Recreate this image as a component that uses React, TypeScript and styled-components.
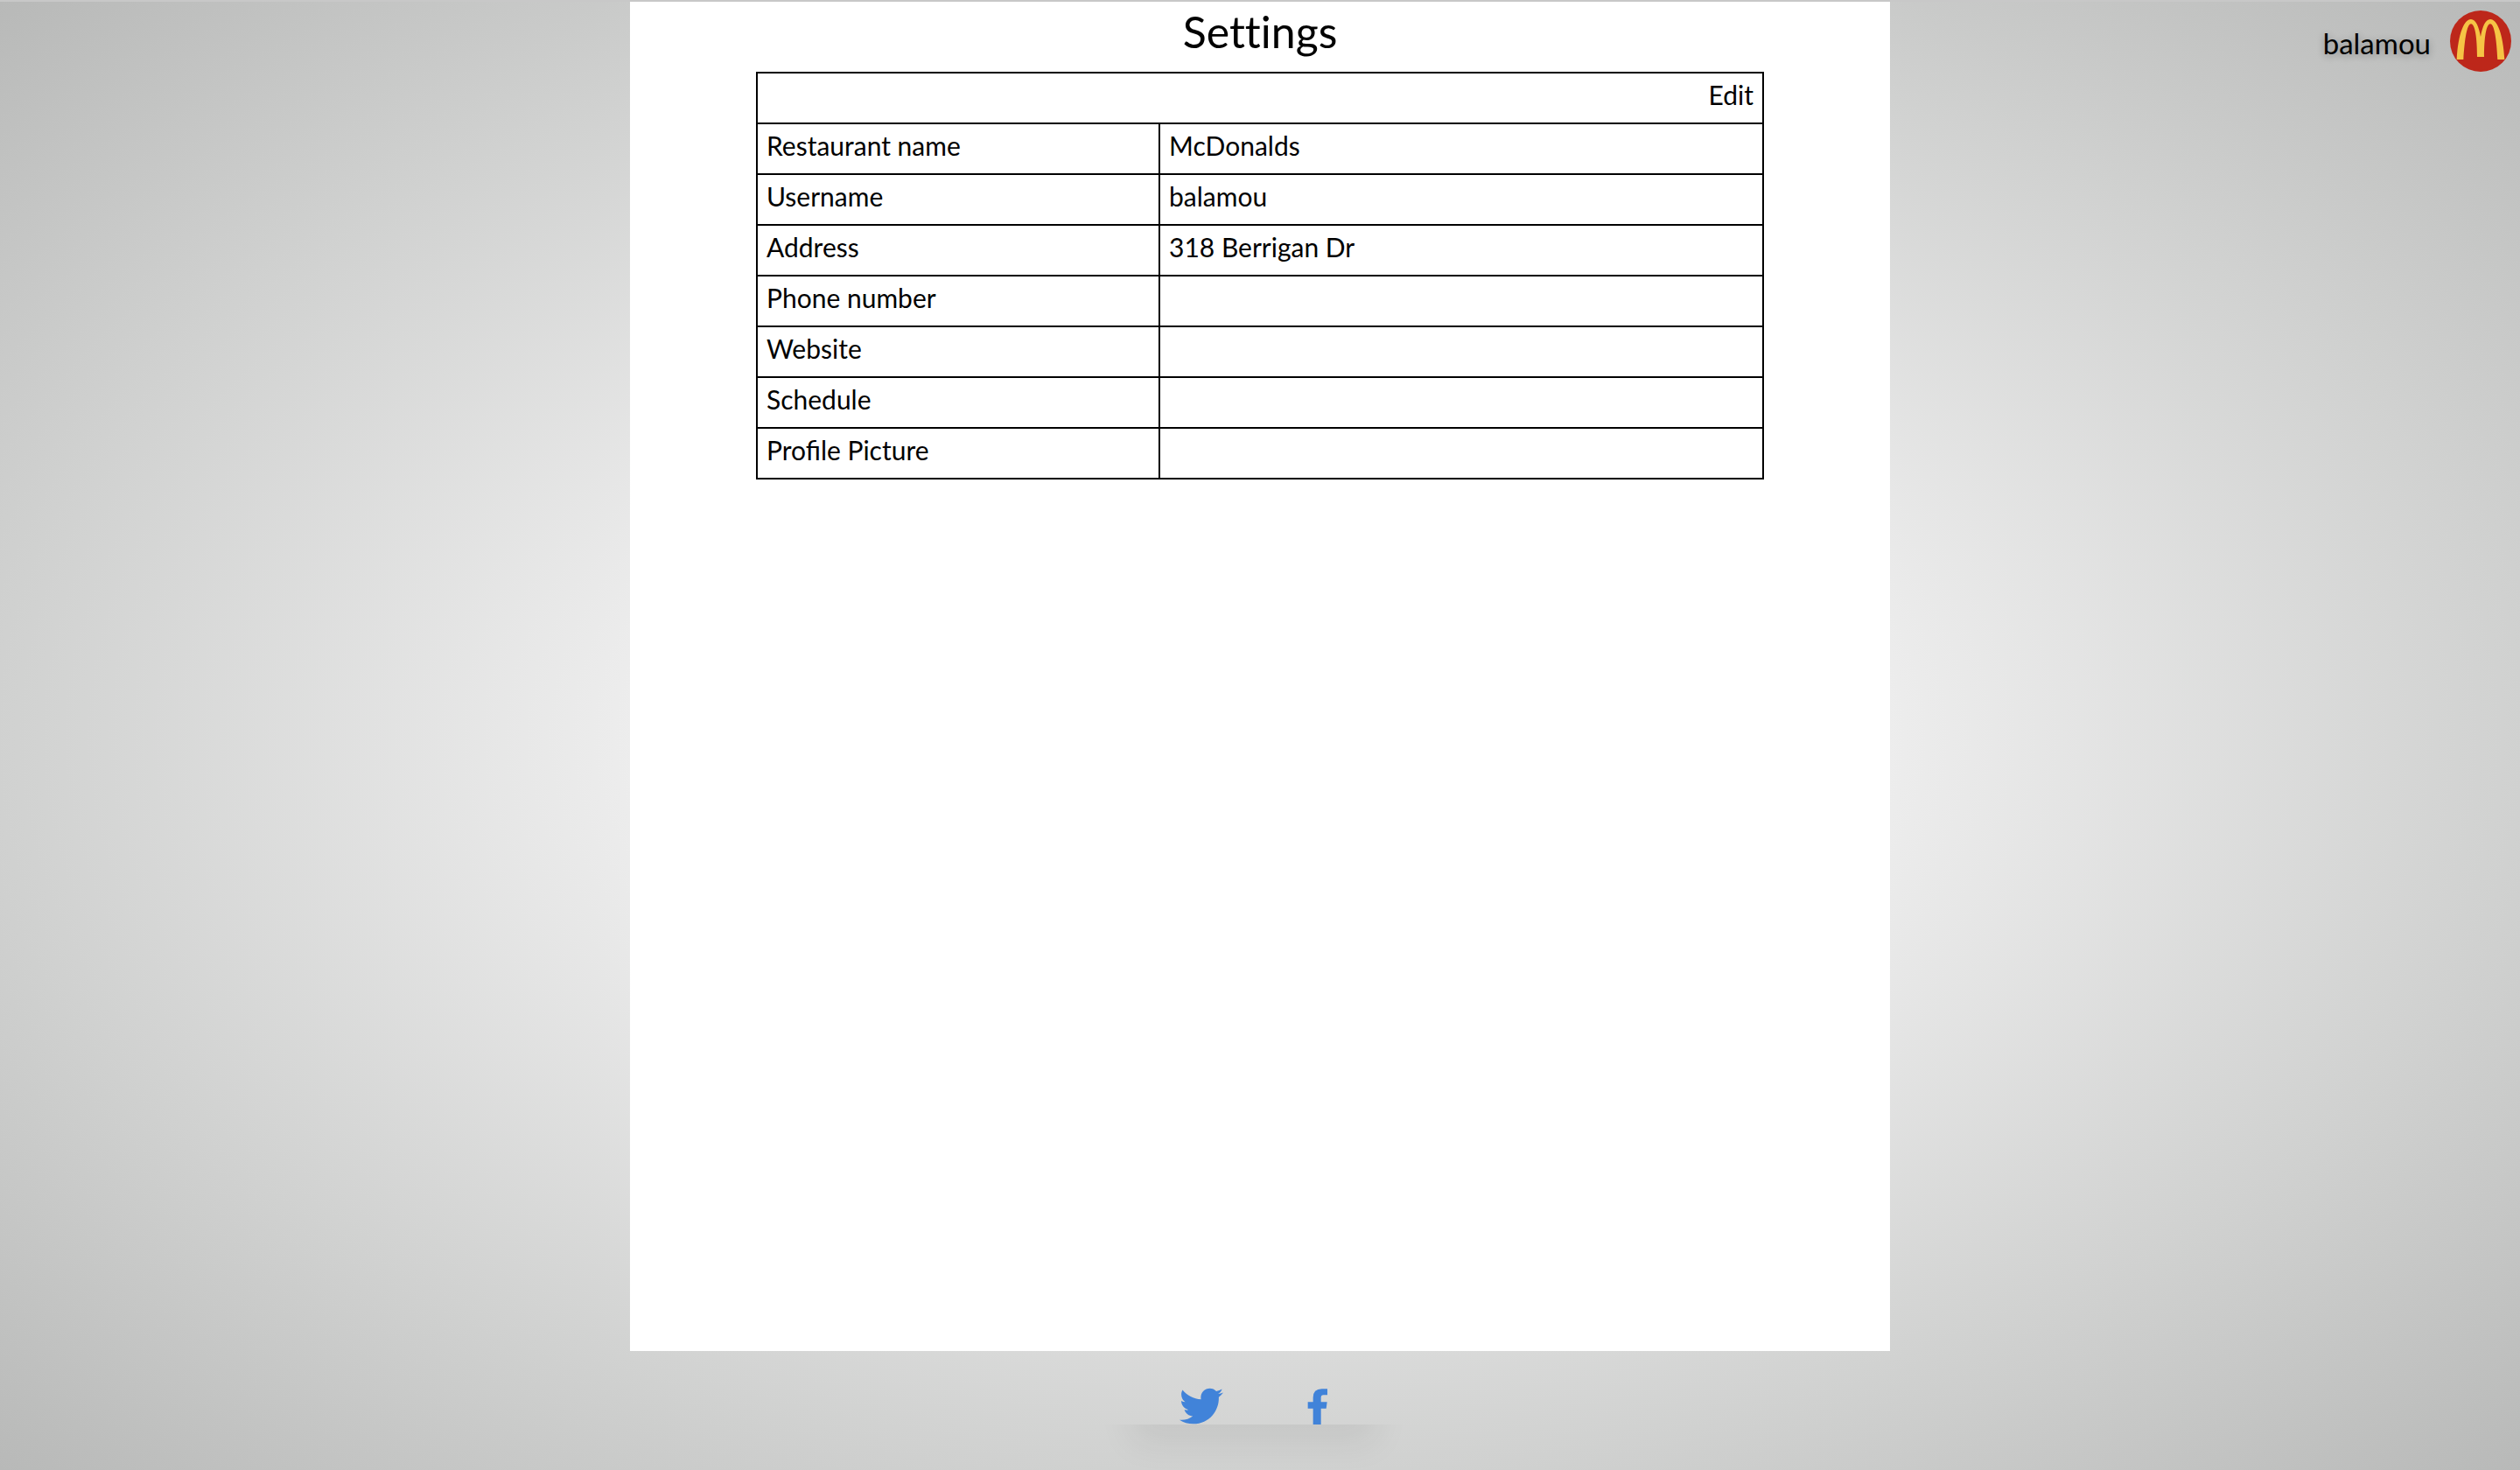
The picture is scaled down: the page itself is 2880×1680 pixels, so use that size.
import React from "react";
import styled, { createGlobalStyle } from "styled-components";
import { FaTwitter } from "react-icons/fa";

const GlobalStyle = createGlobalStyle`
  * { box-sizing: border-box; }
  body {
    margin: 0;
    color: #000;
    font-family: Lato, "Open Sans", sans-serif;
    font-size: 30px;
    line-height: 40px;
  }
`;

const Page = styled.div`
  min-height: 100vh;
  display: grid;
  grid-template-columns: 1fr 2fr 1fr;
  grid-template-rows: 1fr auto;
  border-top: 2px solid #c8c8c8;
  background: radial-gradient(ellipse farthest-corner at center, #ffffff 12%, #ededed 35%, #d0d1d0 71%, #b8b9b8 100%);
`;

const Sheet = styled.main`
  grid-column: 2;
  background: #fff;
`;

const Title = styled.h1`
  margin: 0;
  padding: 2px 0 14px;
  font-size: 50px;
  line-height: 64px;
  font-weight: 400;
  font-variant-ligatures: none;
  text-align: center;
`;

const Table = styled.table`
  width: 80%;
  margin: 0 auto;
  table-layout: fixed;
  border-collapse: collapse;
`;

const LabelColumn = styled.col`
  width: 40%;
`;

const cell = `
  height: 58px;
  padding: 4px 10px 10px;
  border: 2px solid #000;
  font-weight: 400;
  vertical-align: top;
`;

const Label = styled.th`
  ${cell}
  text-align: left;
`;

const Value = styled.td<{ $align?: "left" | "right" }>`
  ${cell}
  text-align: ${(p) => p.$align ?? "left"};
`;

const EditButton = styled.button`
  padding: 0;
  border: 0;
  background: none;
  color: inherit;
  font: inherit;
  display: block;
  margin-left: auto;
  cursor: pointer;
`;

const Account = styled.a`
  grid-column: 3;
  justify-self: end;
  align-self: start;
  display: flex;
  align-items: center;
  gap: 22px;
  padding: 10px 10px 0 0;
  color: inherit;
  font-size: 33px;
  text-decoration: none;
  text-shadow: 0 2px 8px rgba(0, 0, 0, 0.3);
`;

const AccountName = styled.span`
  padding-top: 4px;
`;

const Avatar = styled.svg`
  width: 70px;
  height: 70px;
`;

const Footer = styled.footer`
  grid-column: 1 / -1;
  height: 136px;
  padding: 42px 14px 0 0;
  display: flex;
  flex-direction: column;
  align-items: center;
`;

const Social = styled.nav`
  width: 170px;
  display: flex;
  justify-content: space-between;
`;

const SocialLink = styled.a`
  display: flex;
  color: #4183d9;
`;

const Bird = styled(FaTwitter)`
  width: 50px;
  height: 50px;
  margin: -4px 0;
`;

const FacebookMark = styled.svg`
  width: 24px;
  height: 42px;
`;

const ShadowClip = styled.div`
  width: 400px;
  height: 52px;
  overflow: hidden;
`;

const FooterShadow = styled.div`
  width: 280px;
  height: 60px;
  margin: -60px auto 0;
  box-shadow: 0 20px 40px rgba(0, 0, 0, 0.07);
`;

const rows = [
  { label: "Restaurant name", value: "McDonalds" },
  { label: "Username", value: "balamou" },
  { label: "Address", value: "318 Berrigan Dr" },
  { label: "Phone number", value: "" },
  { label: "Website", value: "" },
  { label: "Schedule", value: "" },
  { label: "Profile Picture", value: "" },
];

export default function App() {
  return (
    <>
      <GlobalStyle />
      <Page>
        <Sheet>
          <Title>Settings</Title>
          <Table>
            <colgroup>
              <LabelColumn />
              <col />
            </colgroup>
            <tbody>
              <tr>
                <Value colSpan={2} $align="right">
                  <EditButton type="button">Edit</EditButton>
                </Value>
              </tr>
              {rows.map((row) => (
                <tr key={row.label}>
                  <Label scope="row">{row.label}</Label>
                  <Value>{row.value}</Value>
                </tr>
              ))}
            </tbody>
          </Table>
        </Sheet>
        <Account href="#account">
          <AccountName>balamou</AccountName>
          <Avatar viewBox="0 0 210 210" aria-hidden="true">
            <circle cx="105" cy="105" r="105" fill="#bd271a" />
            <path
              fill="#f6c445"
              d="M23 168C28 80 48 30 72 30C88 30 99 55 105 90C111 55 122 30 138 30C162 30 182 80 187 168H163C160 100 152 46 138 46C124 46 117 95 117 159H93C93 95 86 46 72 46C58 46 50 100 46 168Z"
            />
          </Avatar>
        </Account>
        <Footer>
          <Social aria-label="Social media">
            <SocialLink href="#twitter" aria-label="Twitter">
              <Bird />
            </SocialLink>
            <SocialLink href="#facebook" aria-label="Facebook">
              <FacebookMark viewBox="0 0 72 126" aria-hidden="true">
                <path
                  fill="currentColor"
                  d="M69 4V25H55Q47 25 47 34V49H68L65 71H47V126H20V71H2V49H20V34Q20 4 50 4Z"
                />
              </FacebookMark>
            </SocialLink>
          </Social>
          <ShadowClip>
            <FooterShadow />
          </ShadowClip>
        </Footer>
      </Page>
    </>
  );
}
